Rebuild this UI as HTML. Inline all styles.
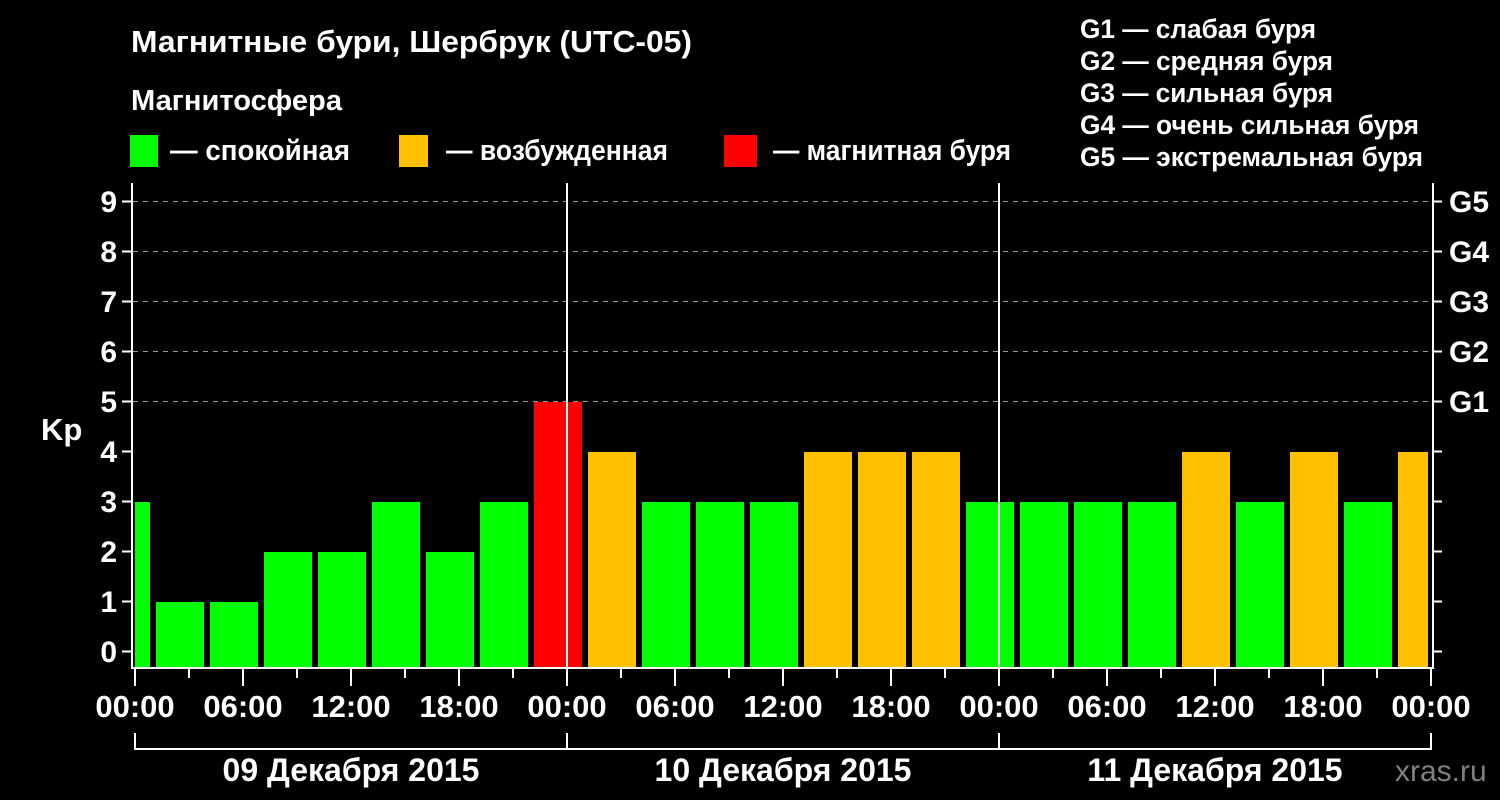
<!DOCTYPE html>
<html><head><meta charset="utf-8"><style>html,body{margin:0;padding:0;background:#000;}svg{display:block}</style></head>
<body>
<svg width="1500" height="800" viewBox="0 0 1500 800" xmlns="http://www.w3.org/2000/svg" font-family="Liberation Sans, Arial, sans-serif" font-weight="bold" fill="#fff">
<rect width="1500" height="800" fill="#000"/>
<text x="131" y="52" font-size="31" textLength="561" lengthAdjust="spacingAndGlyphs">Магнитные бури, Шербрук (UTC-05)</text>
<text x="131" y="110" font-size="29" textLength="211" lengthAdjust="spacingAndGlyphs">Магнитосфера</text>
<rect x="130" y="135" width="28" height="32" fill="#00ff00"/>
<text x="170" y="160" font-size="29" textLength="180" lengthAdjust="spacingAndGlyphs">— спокойная</text>
<rect x="399" y="135" width="29" height="32" fill="#ffc000"/>
<text x="446" y="160" font-size="29" textLength="222" lengthAdjust="spacingAndGlyphs">— возбужденная</text>
<rect x="724" y="135" width="33" height="32" fill="#ff0000"/>
<text x="773" y="160" font-size="29" textLength="238" lengthAdjust="spacingAndGlyphs">— магнитная буря</text>
<g font-size="27">
<text x="1080" y="38" textLength="236" lengthAdjust="spacingAndGlyphs">G1 — слабая буря</text>
<text x="1080" y="70" textLength="253" lengthAdjust="spacingAndGlyphs">G2 — средняя буря</text>
<text x="1080" y="102" textLength="253" lengthAdjust="spacingAndGlyphs">G3 — сильная буря</text>
<text x="1080" y="134" textLength="339" lengthAdjust="spacingAndGlyphs">G4 — очень сильная буря</text>
<text x="1080" y="166" textLength="343" lengthAdjust="spacingAndGlyphs">G5 — экстремальная буря</text>
</g>
<g stroke="#999" stroke-width="1" stroke-dasharray="5,5">
<line x1="133" y1="201.5" x2="1432" y2="201.5"/>
<line x1="133" y1="251.5" x2="1432" y2="251.5"/>
<line x1="133" y1="301.5" x2="1432" y2="301.5"/>
<line x1="133" y1="351.5" x2="1432" y2="351.5"/>
<line x1="133" y1="401.5" x2="1432" y2="401.5"/>
</g>
<g>
<rect x="135" y="502" width="15" height="166" fill="#00ff00"/>
<rect x="156" y="602" width="48" height="66" fill="#00ff00"/>
<rect x="210" y="602" width="48" height="66" fill="#00ff00"/>
<rect x="264" y="552" width="48" height="116" fill="#00ff00"/>
<rect x="318" y="552" width="48" height="116" fill="#00ff00"/>
<rect x="372" y="502" width="48" height="166" fill="#00ff00"/>
<rect x="426" y="552" width="48" height="116" fill="#00ff00"/>
<rect x="480" y="502" width="48" height="166" fill="#00ff00"/>
<rect x="534" y="402" width="48" height="266" fill="#ff0000"/>
<rect x="588" y="452" width="48" height="216" fill="#ffc000"/>
<rect x="642" y="502" width="48" height="166" fill="#00ff00"/>
<rect x="696" y="502" width="48" height="166" fill="#00ff00"/>
<rect x="750" y="502" width="48" height="166" fill="#00ff00"/>
<rect x="804" y="452" width="48" height="216" fill="#ffc000"/>
<rect x="858" y="452" width="48" height="216" fill="#ffc000"/>
<rect x="912" y="452" width="48" height="216" fill="#ffc000"/>
<rect x="966" y="502" width="48" height="166" fill="#00ff00"/>
<rect x="1020" y="502" width="48" height="166" fill="#00ff00"/>
<rect x="1074" y="502" width="48" height="166" fill="#00ff00"/>
<rect x="1128" y="502" width="48" height="166" fill="#00ff00"/>
<rect x="1182" y="452" width="48" height="216" fill="#ffc000"/>
<rect x="1236" y="502" width="48" height="166" fill="#00ff00"/>
<rect x="1290" y="452" width="48" height="216" fill="#ffc000"/>
<rect x="1344" y="502" width="48" height="166" fill="#00ff00"/>
<rect x="1398" y="452" width="30" height="216" fill="#ffc000"/>
</g>
<g stroke="#fff" stroke-width="2" fill="none">
<polyline points="132,183 132,668 1433,668 1433,183"/>
<line x1="567" y1="183" x2="567" y2="668"/>
<line x1="999" y1="183" x2="999" y2="668"/>
</g>
<g stroke="#fff" stroke-width="2">
<line x1="122" y1="201.5" x2="132" y2="201.5"/><line x1="1433" y1="201.5" x2="1442" y2="201.5"/>
<line x1="122" y1="251.5" x2="132" y2="251.5"/><line x1="1433" y1="251.5" x2="1442" y2="251.5"/>
<line x1="122" y1="301.5" x2="132" y2="301.5"/><line x1="1433" y1="301.5" x2="1442" y2="301.5"/>
<line x1="122" y1="351.5" x2="132" y2="351.5"/><line x1="1433" y1="351.5" x2="1442" y2="351.5"/>
<line x1="122" y1="401.5" x2="132" y2="401.5"/><line x1="1433" y1="401.5" x2="1442" y2="401.5"/>
<line x1="122" y1="451.5" x2="132" y2="451.5"/><line x1="1433" y1="451.5" x2="1442" y2="451.5"/>
<line x1="122" y1="501.5" x2="132" y2="501.5"/><line x1="1433" y1="501.5" x2="1442" y2="501.5"/>
<line x1="122" y1="551.5" x2="132" y2="551.5"/><line x1="1433" y1="551.5" x2="1442" y2="551.5"/>
<line x1="122" y1="601.5" x2="132" y2="601.5"/><line x1="1433" y1="601.5" x2="1442" y2="601.5"/>
<line x1="122" y1="651.5" x2="132" y2="651.5"/><line x1="1433" y1="651.5" x2="1442" y2="651.5"/>
<line x1="135" y1="668" x2="135" y2="686"/><line x1="189" y1="668" x2="189" y2="678"/>
<line x1="243" y1="668" x2="243" y2="686"/><line x1="297" y1="668" x2="297" y2="678"/>
<line x1="351" y1="668" x2="351" y2="686"/><line x1="405" y1="668" x2="405" y2="678"/>
<line x1="459" y1="668" x2="459" y2="686"/><line x1="513" y1="668" x2="513" y2="678"/>
<line x1="567" y1="668" x2="567" y2="686"/><line x1="621" y1="668" x2="621" y2="678"/>
<line x1="675" y1="668" x2="675" y2="686"/><line x1="729" y1="668" x2="729" y2="678"/>
<line x1="783" y1="668" x2="783" y2="686"/><line x1="837" y1="668" x2="837" y2="678"/>
<line x1="891" y1="668" x2="891" y2="686"/><line x1="945" y1="668" x2="945" y2="678"/>
<line x1="999" y1="668" x2="999" y2="686"/><line x1="1053" y1="668" x2="1053" y2="678"/>
<line x1="1107" y1="668" x2="1107" y2="686"/><line x1="1161" y1="668" x2="1161" y2="678"/>
<line x1="1215" y1="668" x2="1215" y2="686"/><line x1="1269" y1="668" x2="1269" y2="678"/>
<line x1="1323" y1="668" x2="1323" y2="686"/><line x1="1377" y1="668" x2="1377" y2="678"/>
<line x1="1431" y1="668" x2="1431" y2="686"/>
</g>
<g stroke="#fff" stroke-width="2" fill="none">
<polyline points="135,733 135,749 1431,749 1431,733"/>
<line x1="567" y1="733" x2="567" y2="749"/>
<line x1="999" y1="733" x2="999" y2="749"/>
</g>
<g font-size="30" text-anchor="end">
<text x="117" y="212">9</text><text x="117" y="262">8</text><text x="117" y="312">7</text>
<text x="117" y="362">6</text><text x="117" y="412">5</text><text x="117" y="462">4</text>
<text x="117" y="512">3</text><text x="117" y="562">2</text><text x="117" y="612">1</text>
<text x="117" y="662">0</text>
</g>
<text x="41" y="440" font-size="31">Kp</text>
<g font-size="30">
<text x="1449" y="212">G5</text><text x="1449" y="262">G4</text><text x="1449" y="312">G3</text>
<text x="1449" y="362">G2</text><text x="1449" y="412">G1</text>
</g>
<g font-size="31" text-anchor="middle">
<text x="135" y="717">00:00</text><text x="243" y="717">06:00</text><text x="351" y="717">12:00</text><text x="459" y="717">18:00</text>
<text x="567" y="717">00:00</text><text x="675" y="717">06:00</text><text x="783" y="717">12:00</text><text x="891" y="717">18:00</text>
<text x="999" y="717">00:00</text><text x="1107" y="717">06:00</text><text x="1215" y="717">12:00</text><text x="1323" y="717">18:00</text>
<text x="1431" y="717">00:00</text>
</g>
<g font-size="32" text-anchor="middle">
<text x="351" y="781">09 Декабря 2015</text>
<text x="783" y="781">10 Декабря 2015</text>
<text x="1215" y="781">11 Декабря 2015</text>
</g>
<text x="1395" y="781" font-size="30" fill="#7f7f7f" font-weight="normal">xras.ru</text>
</svg>
</body></html>
